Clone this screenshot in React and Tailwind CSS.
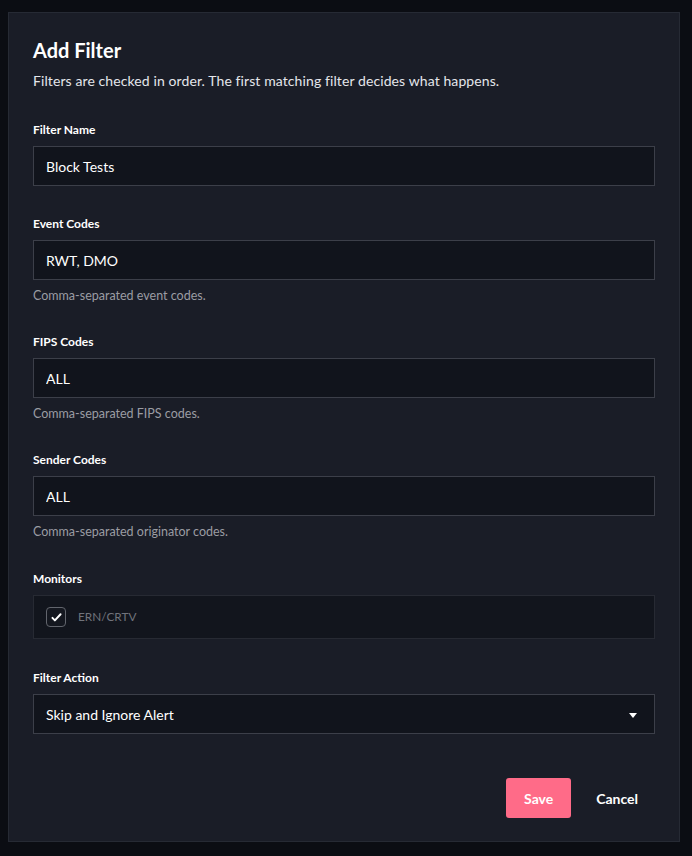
import { useState } from 'react';

const fields = [
  { label: 'Filter Name', value: 'Block Tests' },
  { label: 'Event Codes', value: 'RWT, DMO', help: 'Comma-separated event codes.' },
  { label: 'FIPS Codes', value: 'ALL', help: 'Comma-separated FIPS codes.' },
  { label: 'Sender Codes', value: 'ALL', help: 'Comma-separated originator codes.' },
];

function Label({ children }) {
  return <label className="block text-[12px] font-bold text-white leading-4 mb-2">{children}</label>;
}

export default function App() {
  const [values, setValues] = useState(fields.map((f) => f.value));
  const [checked, setChecked] = useState(true);

  return (
    <div
      className="min-h-[856px] bg-[#0b0d13] pt-3 pl-2 pr-3 pb-[14px]"
      style={{ fontFamily: 'Lato, "Open Sans", sans-serif' }}
    >
      <div className="w-[672px] bg-[#1a1d27] border border-[#262a34] px-6 pt-[25px] pb-[23px]">
        <h2 className="text-[20px] font-bold text-white leading-6">Add Filter</h2>
        <p className="mt-[9px] text-[14px] tracking-[0.1px] text-[#e4e6eb] leading-5">
          Filters are checked in order. The first matching filter decides what happens.
        </p>

        <div className="mt-[31px]">
          {fields.map((f, i) => (
            <div key={f.label} className={i === 0 ? '' : 'mt-[30px]'}>
              <Label>{f.label}</Label>
              <input
                value={values[i]}
                onChange={(e) => setValues(values.map((v, j) => (j === i ? e.target.value : v)))}
                className="block w-full h-10 bg-[#11141c] border border-[#3c3f49] px-3 text-[14px] text-white outline-none"
              />
              {f.help && <p className="mt-2 text-[12.5px] text-[#9a9ca3] leading-4">{f.help}</p>}
            </div>
          ))}

          <div className="mt-[31px]">
            <Label>Monitors</Label>
            <div className="h-[44px] bg-[#12151d] border border-[#272a33] flex items-center px-3">
              <button
                onClick={() => setChecked(!checked)}
                className="w-5 h-5 rounded-[4px] border border-[#62656d] bg-[#14171f] flex items-center justify-center"
              >
                {checked && (
                  <svg viewBox="0 0 16 16" className="w-[13px] h-[13px]" fill="none" stroke="white" strokeWidth="2.4" strokeLinecap="round" strokeLinejoin="round">
                    <path d="M3 8.5l3 3 7-7.5" />
                  </svg>
                )}
              </button>
              <span className="ml-3 text-[11.8px] text-[#70737b]">ERN/CRTV</span>
            </div>
          </div>

          <div className="mt-[31px]">
            <Label>Filter Action</Label>
            <div className="relative h-10 bg-[#11141c] border border-[#3c3f49] flex items-center px-3">
              <span className="text-[14px] text-white">Skip and Ignore Alert</span>
              <svg viewBox="0 0 8 5" className="absolute right-[17px] top-[18px] w-2 h-[5px]" fill="white">
                <path d="M0 0h8L4 5z" />
              </svg>
            </div>
          </div>
        </div>

        <div className="mt-11 flex justify-end items-center gap-[25px] pr-[17px]">
          <button className="h-10 w-[65px] rounded-[3px] bg-[#ff6b88] text-white text-[14px] font-bold">Save</button>
          <button className="text-white text-[14px] font-bold">Cancel</button>
        </div>
      </div>
    </div>
  );
}
